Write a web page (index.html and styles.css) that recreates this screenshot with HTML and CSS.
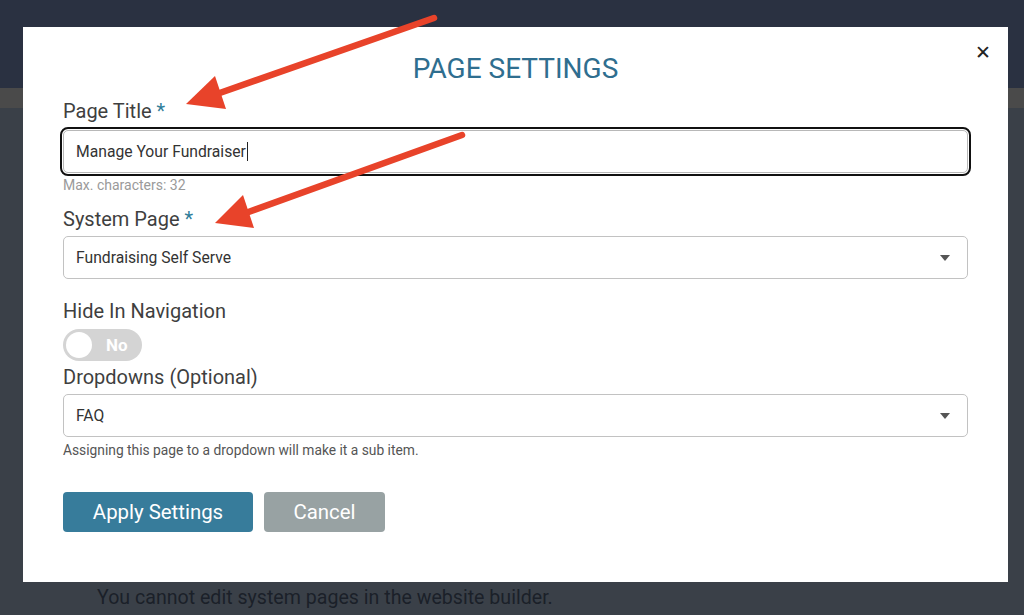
FILE: index.html
```html
<!DOCTYPE html>
<html>
<head>
<meta charset="utf-8">
<link rel="stylesheet" href="styles.css">
</head>
<body>
<div class="page">
  <div class="topbar"></div>
  <div class="strip"></div>
  <div class="content">
    <p class="behind">You cannot edit system pages in the website builder.</p>
  </div>
</div>

<div class="modal">
  <button class="close" aria-label="Close">&#x2715;</button>
  <h1 class="title">PAGE SETTINGS</h1>

  <label class="label l1">Page Title <span class="req">*</span></label>
  <div class="input focused"><span>Manage Your Fundraiser</span><span class="cursor"></span></div>
  <div class="hint muted">Max. characters: 32</div>

  <label class="label l2">System Page <span class="req">*</span></label>
  <div class="input select"><span>Fundraising Self Serve</span><span class="caret"></span></div>

  <label class="label l3">Hide In Navigation</label>
  <div class="toggle"><span class="knob"></span><span class="tog-text">No</span></div>

  <label class="label l4">Dropdowns (Optional)</label>
  <div class="input select"><span>FAQ</span><span class="caret"></span></div>
  <div class="hint dark">Assigning this page to a dropdown will make it a sub item.</div>

  <div class="actions">
    <button class="btn primary">Apply Settings</button>
    <button class="btn secondary">Cancel</button>
  </div>
</div>

<svg class="arrows" width="1024" height="615" viewBox="0 0 1024 615">
  <line x1="434" y1="18" x2="214" y2="95" stroke="#e8432a" stroke-width="6.5" stroke-linecap="round"/>
  <polygon points="215,76 186,104 226,109" fill="#e8432a"/>
  <line x1="462" y1="135" x2="243" y2="214" stroke="#e8432a" stroke-width="6.5" stroke-linecap="round"/>
  <polygon points="243,195 215,223 254,228" fill="#e8432a"/>
</svg>
</body>
</html>
```

FILE: styles.css
```css
html, body {
  margin: 0;
  padding: 0;
  width: 1024px;
  height: 615px;
  overflow: hidden;
  font-family: Roboto, "Liberation Sans", Arial, sans-serif;
}

.page {
  display: flex;
  flex-direction: column;
  height: 615px;
  background: #3a4048;
}
.topbar {
  height: 88px;
  background: #2a3141;
}
.strip {
  height: 20px;
  background: #4a4a4a;
}
.content {
  flex: 1;
  display: flex;
  flex-direction: column;
  justify-content: flex-end;
  padding: 0 0 5px 97px;
}
.behind {
  margin: 0;
  font-size: 19.6px;
  line-height: 24px;
  color: #1b2029;
}

.modal {
  position: fixed;
  left: 23px;
  top: 27px;
  width: 985px;
  height: 555px;
  box-sizing: border-box;
  background: #fff;
  padding: 26px 40px 0 40px;
  display: flex;
  flex-direction: column;
  align-items: stretch;
}

.close {
  position: absolute;
  right: 17px;
  top: 14px;
  border: 0;
  background: none;
  padding: 0;
  font-family: "DejaVu Sans", sans-serif;
  font-weight: bold;
  font-size: 19px;
  line-height: 22px;
  color: #222;
}

.title {
  margin: 0;
  text-align: center;
  font-weight: 400;
  font-size: 28px;
  line-height: 32px;
  color: #2f6e8f;
}

.label {
  display: block;
  font-size: 20px;
  line-height: 24px;
  color: #3f3f3f;
  margin-bottom: 6px;
}
.l1 { margin-top: 14px; margin-bottom: 5px; }
.l2 { margin-top: 14px; margin-bottom: 5px; }
.l3 { margin-top: 20px; margin-bottom: 6px; }
.l4 { margin-top: 4px; margin-bottom: 5px; }

.req { color: #2f7d9b; }

.input {
  height: 43px;
  box-sizing: border-box;
  border: 1px solid #c2c2c2;
  border-radius: 5px;
  padding: 0 12px;
  display: flex;
  align-items: center;
  font-size: 15.7px;
  color: #333;
}
.focused {
  border-color: #b8b8b8;
  outline: 2px solid #111;
  outline-offset: 1px;
  margin-top: 2px;
}
.cursor {
  width: 1px;
  height: 19px;
  background: #222;
  margin-left: 1px;
}
.select {
  justify-content: space-between;
  padding-right: 17px;
}
.caret {
  width: 0;
  height: 0;
  border-left: 5px solid transparent;
  border-right: 5px solid transparent;
  border-top: 6px solid #555;
}

.hint {
  font-size: 14px;
  line-height: 16px;
  margin-top: 4px;
}
.muted { color: #9a9a9a; }
.dark { color: #555; font-size: 13.8px; margin-top: 5px; }

.toggle {
  width: 79px;
  height: 32px;
  border-radius: 16px;
  background: #d4d4d4;
  display: flex;
  align-items: center;
  box-sizing: border-box;
  padding: 0 3px;
}
.knob {
  width: 26px;
  height: 26px;
  border-radius: 50%;
  background: #fff;
}
.tog-text {
  margin-left: 14px;
  color: #fff;
  font-weight: bold;
  font-size: 17px;
}

.actions {
  display: flex;
  gap: 11px;
  margin-top: 34px;
}
.btn {
  height: 40px;
  border: 0;
  border-radius: 4px;
  font-family: Roboto, "Liberation Sans", Arial, sans-serif;
  font-size: 20.4px;
  color: #fff;
  padding: 0;
}
.primary {
  width: 190px;
  background: #377c9b;
}
.secondary {
  width: 121px;
  background: #98a2a3;
}

.arrows {
  position: fixed;
  left: 0;
  top: 0;
  pointer-events: none;
}
```
